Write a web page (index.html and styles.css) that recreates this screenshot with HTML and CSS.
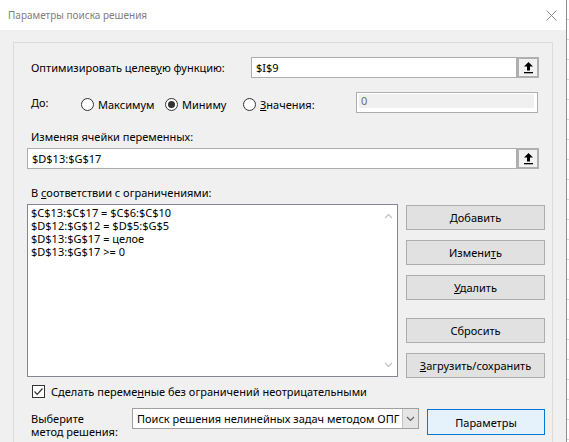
FILE: index.html
```html
<!DOCTYPE html>
<html lang="ru">
<head>
<meta charset="utf-8">
<title>Параметры поиска решения</title>
<link rel="stylesheet" href="styles.css">
</head>
<body>
<div class="screen">
  <div class="dialog">
    <div class="titlebar">
      <span class="title">Параметры поиска решения</span>
      <svg class="close" width="11" height="11" viewBox="0 0 11 11"><path d="M0.5 0.5 L10.5 10.5 M10.5 0.5 L0.5 10.5" stroke="#8a8a8a" stroke-width="1" fill="none"/></svg>
    </div>
    <div class="body">
      <div class="group">
        <div class="row row1">
          <label class="lbl lbl-target">Оптимизировать целев<u>у</u>ю функцию:</label>
          <div class="field field-target">$I$9</div>
          <div class="refbtn">
            <svg width="9" height="12" viewBox="0 0 9 12"><path d="M4.5 0 L9 4.5 L6 4.5 L6 8.5 L3 8.5 L3 4.5 L0 4.5 Z" fill="#000"/><rect x="0" y="10" width="9" height="1.3" fill="#000"/></svg>
          </div>
        </div>
        <div class="row row2">
          <label class="lbl lbl-to">До:</label>
          <div class="radios">
            <div class="radio r1"><span class="circle"></span><span>Максимум</span></div>
            <div class="radio r2"><span class="circle on"></span><span>Миниму</span></div>
            <div class="radio r3"><span class="circle"></span><span><u>З</u>начения:</span></div>
          </div>
          <div class="field-disabled"><div class="inner">0</div></div>
        </div>
        <div class="lbl lbl-block lbl-vars">Изменяя ячейки переменных:</div>
        <div class="row row3">
          <div class="field field-vars">$D$13:$G$17</div>
          <div class="refbtn">
            <svg width="9" height="12" viewBox="0 0 9 12"><path d="M4.5 0 L9 4.5 L6 4.5 L6 8.5 L3 8.5 L3 4.5 L0 4.5 Z" fill="#000"/><rect x="0" y="10" width="9" height="1.3" fill="#000"/></svg>
          </div>
        </div>
        <div class="lbl lbl-block lbl-cons">В <u>с</u>оответствии с ограничениями:</div>
        <div class="main">
          <div class="listbox">
            <div class="items">
              <div class="item">$C$13:$C$17 = $C$6:$C$10</div>
              <div class="item">$D$12:$G$12 = $D$5:$G$5</div>
              <div class="item">$D$13:$G$17 = целое</div>
              <div class="item">$D$13:$G$17 &gt;= 0</div>
            </div>
            <div class="scroll">
              <svg width="9" height="6" viewBox="0 0 9 6"><path d="M1 5 L4.5 1.5 L8 5" stroke="#c2c2c2" stroke-width="1.2" fill="none"/></svg>
              <svg width="9" height="6" viewBox="0 0 9 6"><path d="M1 1 L4.5 4.5 L8 1" stroke="#c2c2c2" stroke-width="1.2" fill="none"/></svg>
            </div>
          </div>
          <div class="buttons">
            <button class="btn b-add"><u>Д</u>обавить</button>
            <button class="btn b-edit">Измени<u>т</u>ь</button>
            <button class="btn b-del"><u>У</u>далить</button>
            <button class="btn b-reset">Сбросить</button>
            <button class="btn b-load"><u>З</u>агрузить/сохранить</button>
          </div>
        </div>
        <div class="check-row">
          <span class="checkbox"><svg width="11" height="11" viewBox="0 0 11 11"><path d="M1.5 5.5 L4.2 8.3 L9.5 2.5" stroke="#333" stroke-width="1.2" fill="none"/></svg></span>
          <span>Сделать переме<u>н</u>ные без ограничений неотрицательными</span>
        </div>
        <div class="method-row">
          <div class="lbl lbl-method">Выберите<br>метод решения:</div>
          <div class="select">
            <div class="sel-text">Поиск решения нелинейных задач методом ОПГ</div>
            <div class="sel-arrow"><svg width="9" height="6" viewBox="0 0 9 6"><path d="M1 1 L4.5 4.5 L8 1" stroke="#606060" stroke-width="1.1" fill="none"/></svg></div>
          </div>
          <button class="btn btn-params">Параметры</button>
        </div>
      </div>
    </div>
  </div>
  <div class="edge"></div>
  <div class="sheet"></div>
</div>
</body>
</html>
```
FILE: styles.css
```css
* { box-sizing: border-box; }
html, body { margin: 0; padding: 0; }
body {
  width: 569px;
  height: 442px;
  overflow: hidden;
  background: #ffffff;
  font-family: "Noto Sans", "Open Sans", sans-serif;
  font-size: 11px;
  color: #000;
}
u { text-decoration: underline; text-underline-offset: 1px; }
.screen { display: flex; width: 569px; height: 442px; }
.dialog { width: 566px; height: 442px; display: flex; flex-direction: column; background: #f0f0f0; }
.edge { width: 1px; background: #8e8e8e; }
.sheet {
  width: 2px;
  background: repeating-linear-gradient(to bottom, #ffffff 0px, #ffffff 19px, #d4d4d4 19px, #d4d4d4 20px);
}
.titlebar {
  height: 30px;
  background: #ffffff;
  display: flex;
  align-items: center;
  justify-content: space-between;
  padding: 0 9px 0 8px;
}
.title { color: #808080; font-size: 10px; line-height: 16px; }
.close { display: block; }
.body { flex: 1; overflow: hidden; }
.group {
  margin: 12px 0 0 13px;
  width: 540px;
  height: 420px;
  border: 1px solid #dcdcdc;
  padding: 0 0 0 13px;
}
.row { display: flex; align-items: center; height: 21px; }
.lbl { line-height: 15px; white-space: nowrap; }
.row1 { margin-top: 14px; }
.lbl-target { width: 224px; padding-left: 4px; }
.field {
  height: 21px;
  background: #ffffff;
  border: 1px solid #adadad;
  line-height: 19px;
  padding-left: 4px;
}
.field-target { width: 266px; }
.field-vars { width: 490px; }
.refbtn {
  width: 22px;
  height: 21px;
  border: 2px solid #b0b0b0;
  background: #f2f2f2;
  display: flex;
  align-items: center;
  justify-content: center;
}
.refbtn svg { display: block; }
.row2 { margin-top: 14px; }
.lbl-to { width: 54px; padding-left: 4px; }
.radios { display: flex; padding-top: 4px; }
.radio { display: flex; align-items: center; gap: 4px; line-height: 15px; }
.r1 { width: 84px; }
.r2 { width: 78px; }
.r3 { width: 113px; }
.circle {
  width: 13px; height: 13px;
  border: 1px solid #333;
  border-radius: 50%;
  background: #fff;
  display: flex; align-items: center; justify-content: center;
  flex: none;
}
.circle.on::after {
  content: "";
  width: 7px; height: 7px;
  border-radius: 50%;
  background: #333;
}
.field-disabled {
  width: 182px;
  height: 21px;
  border: 1px solid #adadad;
  background: #ffffff;
  padding: 1px 3px 4px 2px;
}
.field-disabled .inner {
  height: 100%;
  background: #f0f0f0;
  color: #6d6d6d;
  line-height: 14px;
  padding-left: 2px;
}
.lbl-block { padding-left: 4px; margin-top: 16px; height: 16px; line-height: 16px; }
.row3 { margin-top: 3px; }
.main { display: flex; margin-top: 3px; gap: 8px; }
.listbox {
  width: 371px;
  height: 173px;
  border: 1px solid #828790;
  background: #fff;
  display: flex;
}
.items { flex: 1; padding: 1px 0 0 3px; }
.item { line-height: 13px; white-space: nowrap; }
.scroll {
  width: 17px;
  display: flex;
  flex-direction: column;
  justify-content: space-between;
  align-items: center;
  padding: 8px 0 8px 0;
}
.scroll svg { display: block; }
.buttons { display: flex; flex-direction: column; width: 139px; padding-top: 1px; }
.btn {
  font-family: inherit;
  font-size: 11px;
  color: #000;
  background: #e1e1e1;
  border: 1px solid #adadad;
  height: 25px;
  padding: 0;
  margin: 0;
  line-height: 15px;
}
.buttons .btn { width: 139px; }
.b-edit, .b-del { margin-top: 10px; }
.b-reset { margin-top: 18px; }
.b-load { margin-top: 10px; }
.check-row { display: flex; align-items: center; margin-top: 7px; height: 13px; padding-left: 5px; gap: 6px; line-height: 15px; }
.checkbox {
  width: 13px; height: 13px;
  border: 1px solid #333;
  background: #fff;
  display: flex; align-items: center; justify-content: center;
  flex: none;
}
.checkbox svg { display: block; }
.method-row { display: flex; align-items: flex-start; margin-top: 10px; }
.lbl-method { width: 105px; padding-left: 4px; line-height: 13px; margin-top: 4px; }
.select {
  width: 287px;
  height: 21px;
  border: 1px solid #a0a0a0;
  background: #fff;
  display: flex;
}
.sel-text { flex: 1; line-height: 19px; padding-left: 4px; white-space: nowrap; overflow: hidden; }
.sel-arrow {
  width: 16px;
  background: #e5e5e5;
  border-left: 1px solid #c4c4c4;
  display: flex; align-items: center; justify-content: center;
}
.sel-arrow svg { display: block; }
.btn-params {
  width: 118px;
  height: 26px;
  margin-left: 8px;
  margin-top: 1px;
  background: #e5f1fb;
  border: 1px solid #0078d7;
}
```
